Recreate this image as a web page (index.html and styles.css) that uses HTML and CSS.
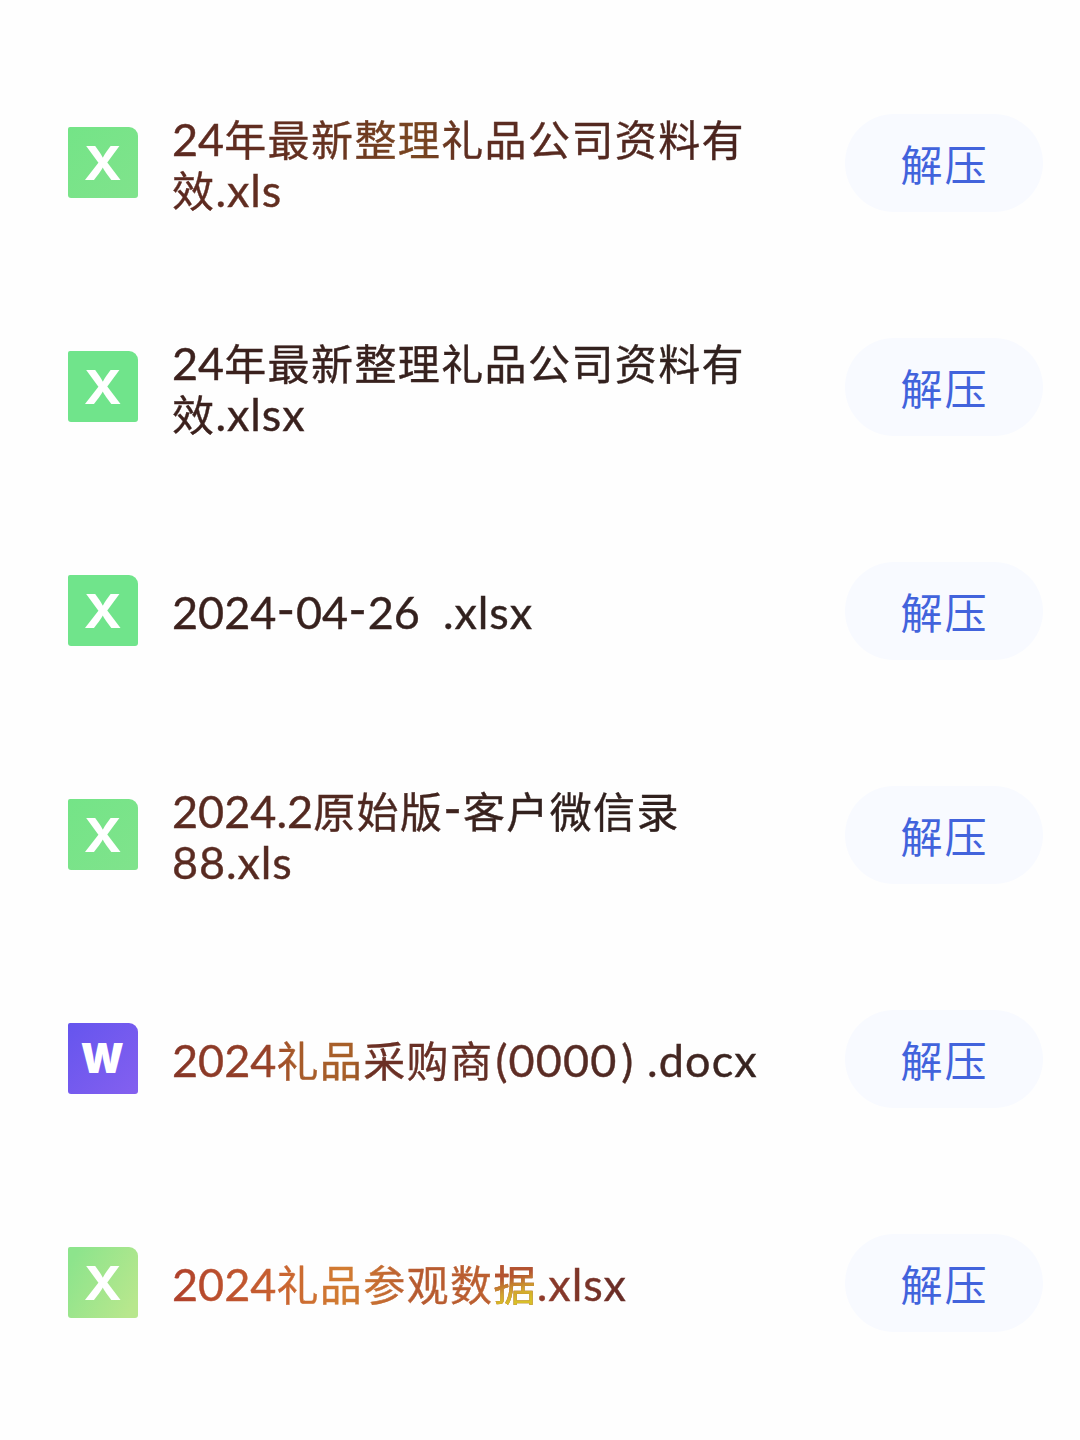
FILE: index.html
```html
<!DOCTYPE html>
<html lang="zh-CN">
<head>
  <meta charset="UTF-8" />
  <meta name="viewport" content="width=device-width, initial-scale=1.0" />
  <title>文件列表</title>
  <link rel="stylesheet" href="styles.css">
</head>
<body>

  <ul class="file-list">
    <li class="file">
      <svg class="icon excel" viewBox="0 0 70 71"><text x="15.5" y="53" textLength="38" lengthAdjust="spacingAndGlyphs">X</text></svg>
      <div class="name"><span class="text tone-brown"><span class="latin">24</span>年最新整理礼品公司资料有<br>效<span class="latin ext">.xls</span></span></div>
      <button class="extract">解压</button>
    </li>
    <li class="file">
      <svg class="icon excel fresh" viewBox="0 0 70 71"><text x="15.5" y="53" textLength="38" lengthAdjust="spacingAndGlyphs">X</text></svg>
      <div class="name"><span class="text tone-dark"><span class="latin">24</span>年最新整理礼品公司资料有<br>效<span class="latin ext">.xlsx</span></span></div>
      <button class="extract">解压</button>
    </li>
    <li class="file">
      <svg class="icon excel fresh" viewBox="0 0 70 71"><text x="15.5" y="53" textLength="38" lengthAdjust="spacingAndGlyphs">X</text></svg>
      <div class="name"><span class="text tone-dark"><span class="latin">2024<span class="dash">-</span>04<span class="dash">-</span>26&nbsp; <span class="ext">.xlsx</span></span></span></div>
      <button class="extract">解压</button>
    </li>
    <li class="file">
      <svg class="icon excel" viewBox="0 0 70 71"><text x="15.5" y="53" textLength="38" lengthAdjust="spacingAndGlyphs">X</text></svg>
      <div class="name"><span class="text tone-fade"><span class="latin">2024.2</span>原始版<span class="latin dash">-</span>客户微信录<br><span class="latin ext">88.xls</span></span></div>
      <button class="extract">解压</button>
    </li>
    <li class="file">
      <svg class="icon word" viewBox="0 0 70 71"><text x="12.5" y="50" textLength="43" lengthAdjust="spacingAndGlyphs">W</text></svg>
      <div class="name"><span class="text tone-rust"><span class="latin">2024</span>礼品采购商<span class="latin paren">(0000<span class="close">)</span> .docx</span></span></div>
      <button class="extract">解压</button>
    </li>
    <li class="file">
      <svg class="icon excel lime" viewBox="0 0 70 71"><text x="15.5" y="53" textLength="38" lengthAdjust="spacingAndGlyphs">X</text></svg>
      <div class="name"><span class="text tone-orange"><span class="latin">2024</span>礼品参观数<span class="gold">据</span><span class="latin ext">.xlsx</span></span></div>
      <button class="extract">解压</button>
    </li>
  </ul>

</body>
</html>
```
FILE: styles.css
```css
body {
  margin: 0;
  background-color: #fefefe;
  font-family: "Noto Sans CJK SC", sans-serif;
}

.file-list {
  list-style: none;
  margin: 0;
  padding: 51px 37px 0 67.5px;
}

.file {
  display: flex;
  align-items: center;
  height: 224px;
}

.icon {
  flex: none;
  width: 70.5px;
  height: 71px;
  margin-bottom: 1px;
  border-radius: 2px 9px 3px 3px;
}

.icon text {
  fill: #fff;
  font-family: Inter, sans-serif;
  font-weight: 700;
  font-size: 46px;
}

.excel {
  background: linear-gradient(135deg, #74e487, #80e38c);
}

.fresh {
  background: #70e48b;
}

.lime {
  background: linear-gradient(120deg, #8de48c 10%, #b8e78d 90%);
}

.word {
  background: linear-gradient(135deg, #6555ee, #8460ef);
}

.word text {
  font-weight: 900;
  font-size: 41px;
}

.name {
  flex: 1;
  margin-left: 34px;
  padding-bottom: 1px;
  font-size: 42px;
  line-height: 51px;
  letter-spacing: 1.4px;
  white-space: nowrap;
}

.text {
  display: inline-block;
  color: transparent;
  -webkit-background-clip: text;
  background-clip: text;
  -webkit-text-stroke: 0.4px transparent;
}

.latin {
  font-family: Lato, sans-serif;
  font-size: 45px;
  line-height: 1;
  letter-spacing: 0;
}

.ext {
  letter-spacing: 0.9px;
}

.dash {
  font-size: 50px;
  line-height: 0;
  letter-spacing: 1px;
  vertical-align: 2px;
}

.paren {
  margin-left: 2px;
  letter-spacing: 1.1px;
}

.close {
  margin-left: 4px;
}

.tone-brown {
  background-image: linear-gradient(90deg, #5c2920, #643020 25%, #7a4721 43%, #5e2d21 52%, #48231e);
}

.tone-dark {
  background-image: linear-gradient(90deg, #3c211d, #2f211e);
}

.tone-fade {
  background-image: linear-gradient(100deg, #5b2b21, #502820 35%, #30201d 70%);
}

.tone-rust {
  background-image: linear-gradient(90deg, #853526, #974129 16%, #a75b2a 21%, #a76029 31%, #6c3025 34%, #5f2d25 60%, #35231f);
}

.tone-orange {
  background-image: linear-gradient(90deg, #af402b, #c86030 22%, #d27d32 38%, #b65a30 54%, #bc6030 70%, #933d2b 80%, #652b25);
}

.gold {
  color: transparent;
  background: linear-gradient(165deg, #b45330 40%, #d1a42d 62%, #d8bf28 78%);
  -webkit-background-clip: text;
  background-clip: text;
}

.extract {
  flex: none;
  width: 198px;
  height: 98px;
  padding: 0 0 2px 1px;
  border: none;
  border-radius: 49px;
  background-color: #f8faff;
  color: #4263dc;
  font-family: "Noto Sans CJK SC", sans-serif;
  font-size: 42px;
  letter-spacing: 2px;
  cursor: pointer;
}
```
